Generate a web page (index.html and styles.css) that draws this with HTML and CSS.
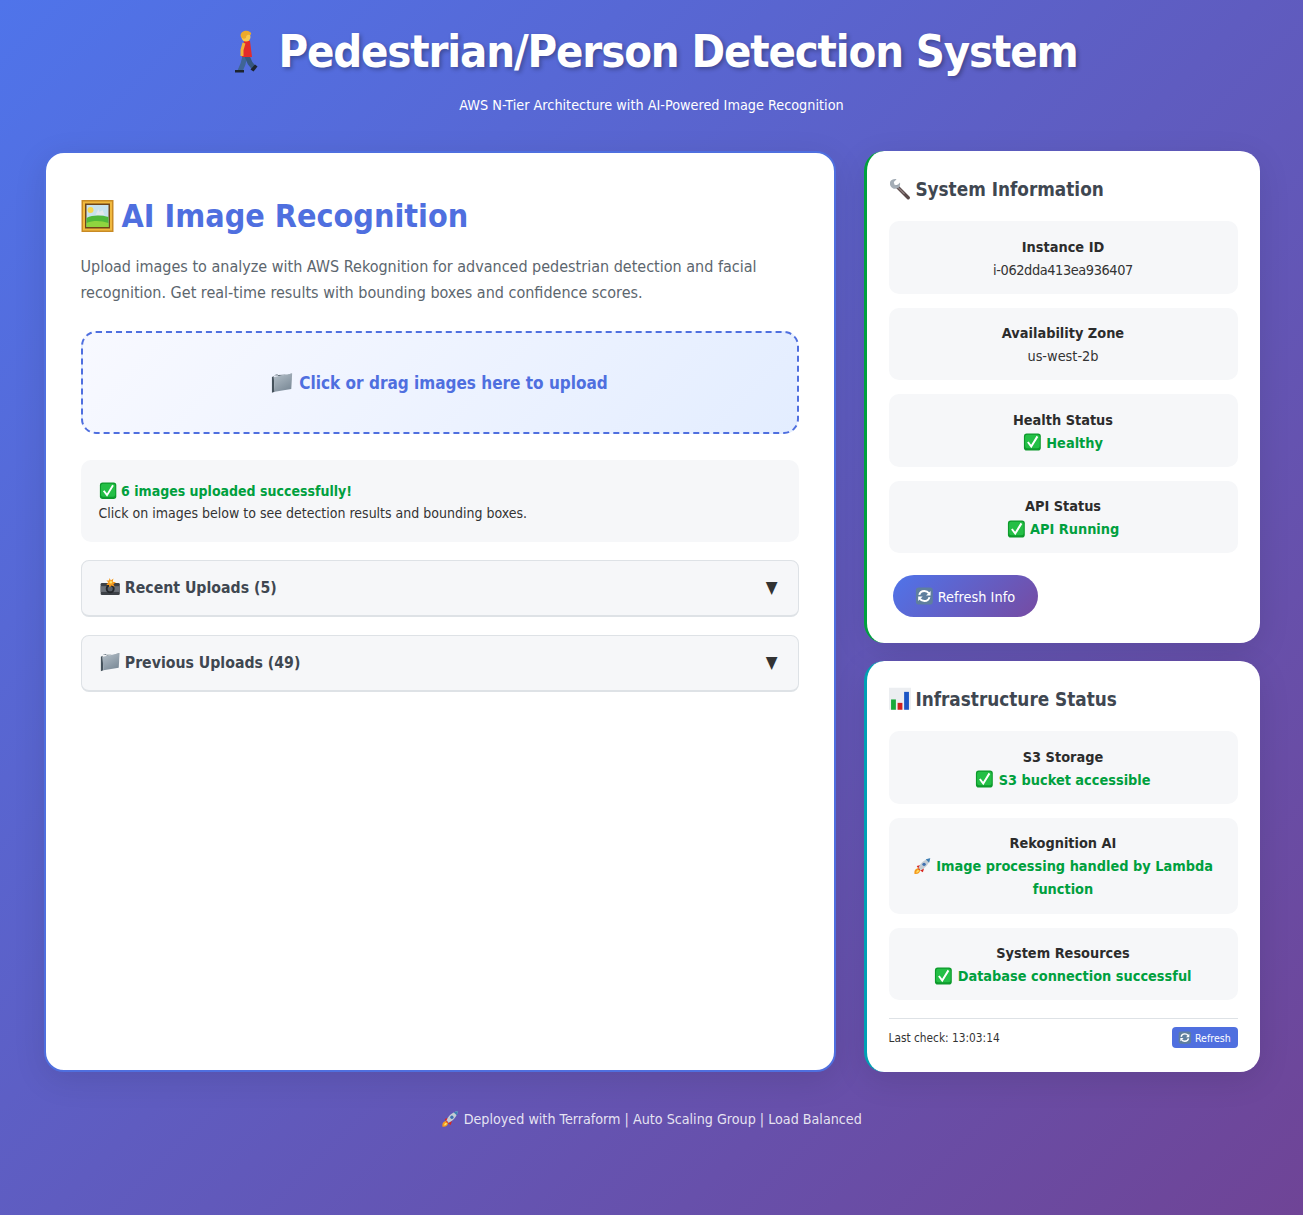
FILE: index.html
```html
<!DOCTYPE html>
<html lang="en">
<head>
    <meta charset="UTF-8">
    <meta name="viewport" content="width=device-width, initial-scale=1.0">
    <title>Pedestrian/Person Detection System</title>
    <link rel="stylesheet" href="styles.css">
</head>
<body>

    <svg class="sprites" aria-hidden="true">
        <defs>
            <linearGradient id="folder-fill" x1="0" y1="0" x2="0.6" y2="1">
                <stop offset="0" stop-color="#b5c0c9"/>
                <stop offset="1" stop-color="#7d8c99"/>
            </linearGradient>
        </defs>
        <symbol id="i-walk" viewBox="0 0 36 46">
            <path d="M18 27l-2 8-3 7" stroke="#3f6596" stroke-width="5" fill="none"/>
            <path d="M20 27l3 7 4 5" stroke="#35577f" stroke-width="5" fill="none"/>
            <path d="M8 41h9v2.500H8z" fill="#1d2430"/>
            <path d="M28 35.500l2.500 2-4 5-3-2z" fill="#1d2430"/>
            <path d="M17 12h6l2 16H15z" fill="#e22b2b"/>
            <path d="M17 14l-2 7 0 6" stroke="#f0b23a" stroke-width="3" fill="none"/>
            <circle cx="19" cy="8" r="4.500" fill="#f7c94f"/>
            <path d="M14 8c-2-5 5-8 9-5 2 1 1 3 0 3-3-1-4 1-4 3-2 1-3 1-5-1z" fill="#eda92a"/>
        </symbol>
        <symbol id="i-picture" viewBox="0 0 32 32">
            <rect width="32" height="32" fill="#c98a24"/>
            <rect x="1.500" y="1.500" width="29" height="29" fill="#f0b93f"/>
            <rect x="3.500" y="3.500" width="25" height="25" fill="#6f4518"/>
            <rect x="5" y="5" width="22" height="22" fill="#c7e2ee"/>
            <circle cx="9" cy="10" r="3" fill="#f7d84f"/>
            <path d="M14 15l3-6 1 3 3-2 2 5z" fill="#e4e7ec"/>
            <path d="M5 18c6-3 14-3 22-1v10H5z" fill="#4fb83a"/>
            <path d="M5 23c8-3 15-2 22 0v4H5z" fill="#8fd43f"/>
        </symbol>
        <symbol id="i-folder" viewBox="0 0 24 22">
            <path d="M1 5l2-1 1 17-3 1z" fill="#45525c"/>
            <path d="M3 3l4-1 1 2 15-3-1 1z" fill="#5d6b76"/>
            <path d="M3 5l20-4-1 17-18 3z" fill="url(#folder-fill)"/>
        </symbol>
        <symbol id="i-check" viewBox="0 0 32 32">
            <rect x="1" y="1" width="30" height="30" rx="5" fill="#0d9a2c"/>
            <rect x="3" y="3" width="26" height="24" rx="4" fill="#24bf46"/>
            <path d="M8 16l6 8L25 6" stroke="#fff" stroke-width="3.500" fill="none"/>
        </symbol>
        <symbol id="i-camera" viewBox="0 0 32 28">
            <rect x="1" y="8" width="30" height="19" rx="2" fill="#3c4046"/>
            <rect x="1" y="13" width="30" height="9" fill="#6a6f76"/>
            <circle cx="16" cy="17" r="7" fill="#24272b"/>
            <circle cx="16" cy="17" r="4" fill="#5a6068"/>
            <path d="M15 0l2 4 4-3-1 5 5 1-4 3 2 4-5-2-3 3-1-4-4 0 3-4-3-3 4 0z" fill="#f59a1f"/>
            <circle cx="17" cy="7" r="2" fill="#fde36a"/>
        </symbol>
        <symbol id="i-wrench" viewBox="0 0 32 32">
            <path d="M12 13L28 29" stroke="#5a4a4a" stroke-width="5" stroke-linecap="round"/>
            <path d="M12 13L22 23" stroke="#8d7f7f" stroke-width="2" stroke-linecap="round"/>
            <path d="M11 2L7 6l1 4 4 1 4-4c1 5-2 9-7 9-6 0-9-6-7-11 1-2 5-4 9-3z" fill="#a4adb6"/>
        </symbol>
        <symbol id="i-chart" viewBox="0 0 32 32">
            <rect width="32" height="32" fill="#eceef1"/>
            <rect x="3" y="17" width="7" height="15" fill="#19a83a"/>
            <rect x="12.500" y="22" width="7" height="10" fill="#d0201f"/>
            <rect x="22" y="6" width="7" height="26" fill="#1c55c4"/>
        </symbol>
        <symbol id="i-refresh" viewBox="0 0 32 32">
            <rect x="1" y="1" width="30" height="30" rx="5" fill="#5f7f9e"/>
            <path d="M7 14c1-5 5-7 9-7 3 0 6 1 8 4" stroke="#fff" stroke-width="3.500" fill="none"/>
            <path d="M27 7v8h-8z" fill="#fff"/>
            <path d="M25 18c-1 5-5 7-9 7-3 0-6-1-8-4" stroke="#fff" stroke-width="3.500" fill="none"/>
            <path d="M5 25v-8h8z" fill="#fff"/>
        </symbol>
        <symbol id="i-rocket" viewBox="0 0 32 32">
            <path d="M2 30c-1-6 2-10 7-10l3 3c0 5-4 8-10 7z" fill="#f59a1f"/>
            <path d="M5 28c0-3 2-5 4-5l1 1c0 2-2 4-5 4z" fill="#fde36a"/>
            <path d="M6 16l7-2-4 7zM17 27l2-7-7 4z" fill="#d8261f"/>
            <path d="M9 19C13 10 20 4 30 2c-2 10-8 17-17 21z" fill="#c3ccd4"/>
            <path d="M22 4l8-2-2 8z" fill="#3f7fb5"/>
            <circle cx="19" cy="13" r="3" fill="#3e6fb0"/>
            <path d="M10 20l2 2-2 1-1-2z" fill="#d8261f"/>
        </symbol>
    </svg>

    <div class="container">
        <header class="header">
            <h1><svg class="icon icon-walk"><use href="#i-walk"/></svg> Pedestrian/Person Detection System</h1>
            <p>AWS N-Tier Architecture with AI-Powered Image Recognition</p>
        </header>

        <div class="main-grid">
            <!-- Upload panel -->
            <section class="card upload-card">
                <h2><svg class="icon"><use href="#i-picture"/></svg> AI Image Recognition</h2>
                <p class="intro">Upload images to analyze with AWS Rekognition for advanced pedestrian detection and facial recognition. Get real-time results with bounding boxes and confidence scores.</p>

                <div class="upload-area">
                    <svg class="icon"><use href="#i-folder"/></svg> Click or drag images here to upload
                </div>

                <div class="upload-result">
                    <strong class="ok"><svg class="icon"><use href="#i-check"/></svg> 6 images uploaded successfully!</strong>
                    <span>Click on images below to see detection results and bounding boxes.</span>
                </div>

                <div class="collapse">
                    <span><svg class="icon"><use href="#i-camera"/></svg> Recent Uploads (5)</span>
                    <span class="arrow">▼</span>
                </div>
                <div class="collapse">
                    <span><svg class="icon"><use href="#i-folder"/></svg> Previous Uploads (49)</span>
                    <span class="arrow">▼</span>
                </div>
            </section>

            <aside class="side">
                <!-- System info -->
                <section class="card info-card">
                    <h3><svg class="icon"><use href="#i-wrench"/></svg> System Information</h3>
                    <div class="stat">
                        <strong>Instance ID</strong>
                        <span class="instance-id">i-062dda413ea936407</span>
                    </div>
                    <div class="stat">
                        <strong>Availability Zone</strong>
                        <span>us-west-2b</span>
                    </div>
                    <div class="stat">
                        <strong>Health Status</strong>
                        <span class="ok"><svg class="icon"><use href="#i-check"/></svg> Healthy</span>
                    </div>
                    <div class="stat">
                        <strong>API Status</strong>
                        <span class="ok"><svg class="icon"><use href="#i-check"/></svg> API Running</span>
                    </div>
                    <button class="btn-refresh"><svg class="icon"><use href="#i-refresh"/></svg> Refresh Info</button>
                </section>

                <!-- Infrastructure -->
                <section class="card infra-card">
                    <h3><svg class="icon"><use href="#i-chart"/></svg> Infrastructure Status</h3>
                    <div class="stat">
                        <strong>S3 Storage</strong>
                        <span class="ok"><svg class="icon"><use href="#i-check"/></svg> S3 bucket accessible</span>
                    </div>
                    <div class="stat">
                        <strong>Rekognition AI</strong>
                        <span class="ok"><svg class="icon"><use href="#i-rocket"/></svg> Image processing handled by Lambda function</span>
                    </div>
                    <div class="stat">
                        <strong>System Resources</strong>
                        <span class="ok"><svg class="icon"><use href="#i-check"/></svg> Database connection successful</span>
                    </div>
                    <div class="last-check">
                        <span>Last check: 13:03:14</span>
                        <button class="btn-small"><svg class="icon"><use href="#i-refresh"/></svg> Refresh</button>
                    </div>
                </section>
            </aside>
        </div>

        <footer class="footer"><svg class="icon"><use href="#i-rocket"/></svg> Deployed with Terraform | Auto Scaling Group | Load Balanced</footer>
    </div>

</body>
</html>
```

FILE: styles.css
```css
* {
    box-sizing: border-box;
    margin: 0;
    padding: 0;
}

body {
    font-family: "DejaVu Sans Condensed", "DejaVu Sans", sans-serif;
    font-stretch: condensed;
    background: linear-gradient(135deg, #4f74ea 0%, #6f4496 100%);
    min-height: 100vh;
    color: #333;
}

.sprites {
    position: absolute;
    width: 0;
    height: 0;
}

.icon {
    width: 1.3em;
    height: 1.25em;
    vertical-align: -0.24em;
}

.container {
    padding: 21px 43.500px 0;
    height: 1215px;
}

.header {
    text-align: center;
    color: #fff;
    height: 130px;
}

.header h1 {
    font-size: 45px;
    line-height: 62px;
    letter-spacing: -1.150px;
    margin-bottom: 10px;
    text-shadow: 2px 2px 4px rgba(0, 0, 0, 0.3);
}

.header h1 .icon-walk {
    width: 36px;
    height: 46px;
    margin: 0 2px;
    vertical-align: -8px;
}

.header p {
    font-size: 14.300px;
    line-height: 24px;
}

.main-grid {
    display: grid;
    grid-template-columns: 2fr 1fr;
    gap: 28px;
}

.card {
    background: #fff;
    border-radius: 20px;
    box-shadow: 0 8px 32px rgba(0, 0, 0, 0.1);
}

.upload-card {
    border: 2px solid #4f6fdf;
    padding: 41px 35px 32px;
}

.upload-card h2 {
    color: #4f6fdf;
    font-size: 32px;
    line-height: 44px;
    margin-bottom: 16px;
}

.upload-card h2 .icon {
    width: 33px;
    height: 32px;
    margin-right: -2px;
    vertical-align: -5px;
}

.intro {
    color: #5c666e;
    font-size: 16px;
    line-height: 25.600px;
    margin-bottom: 26px;
}

.upload-area {
    height: 103px;
    border: 2px dashed #4f6fdf;
    border-radius: 15px;
    background: linear-gradient(135deg, #f8f9ff, #e3edff);
    color: #4f6fdf;
    font-size: 17px;
    font-weight: bold;
    display: flex;
    align-items: center;
    justify-content: center;
    gap: 6px;
    margin-bottom: 26px;
}

.upload-result {
    background: #f6f7f9;
    border-radius: 10px;
    padding: 20px 18px 18px;
    font-size: 14px;
    line-height: 22px;
    margin-bottom: 18px;
}

.upload-result strong,
.upload-result span {
    display: block;
}

.ok {
    color: #00a03e;
    font-weight: bold;
}

.collapse {
    height: 57px;
    background: #f6f7f9;
    border: 1px solid #dee2e6;
    border-bottom-width: 2px;
    border-radius: 8px;
    padding: 0 20px 2px 18px;
    display: flex;
    align-items: center;
    justify-content: space-between;
    color: #3f4751;
    font-size: 15.700px;
    font-weight: bold;
    margin-bottom: 18px;
}

.arrow {
    font-size: 17px;
    color: #333;
}

.side {
    display: flex;
    flex-direction: column;
    gap: 18px;
}

.info-card {
    border-left: 3px solid #00a03e;
    padding: 22px;
}

.infra-card {
    border-left: 3px solid #00a0b4;
    padding: 22px 22px 23px;
}

.side h3 {
    color: #3f4751;
    font-size: 18.800px;
    line-height: 33px;
    margin-bottom: 15px;
}

.side h3 .icon {
    width: 22px;
    margin-right: -1px;
}

.stat {
    background: #f6f7f9;
    border-radius: 10px;
    padding: 14.500px 14px 12.100px;
    text-align: center;
    font-size: 14.400px;
    line-height: 23px;
    margin-bottom: 14px;
}

.stat strong,
.stat span {
    display: block;
}

.stat strong {
    color: #2c2c2c;
}

.instance-id {
    letter-spacing: -0.400px;
}

.btn-refresh {
    background: linear-gradient(135deg, #4f74ea, #764ba2);
    color: #fff;
    border: none;
    border-radius: 25px;
    font-family: inherit;
    font-stretch: inherit;
    font-size: 14.400px;
    height: 42px;
    width: 145px;
    margin: 8px 4px 4px;
}

.last-check {
    border-top: 1px solid #dee2e6;
    margin-top: 18px;
    padding-top: 8px;
    display: flex;
    align-items: center;
    justify-content: space-between;
    font-size: 11.800px;
}

.btn-small {
    background: #4f6fdf;
    color: #fff;
    border: none;
    border-radius: 4px;
    font-family: inherit;
    font-stretch: inherit;
    font-size: 10.500px;
    height: 21px;
    width: 66px;
    margin-bottom: 1px;
}

.footer {
    color: rgba(255, 255, 255, 0.85);
    text-align: center;
    font-size: 14.200px;
    margin-top: 38px;
}
```
